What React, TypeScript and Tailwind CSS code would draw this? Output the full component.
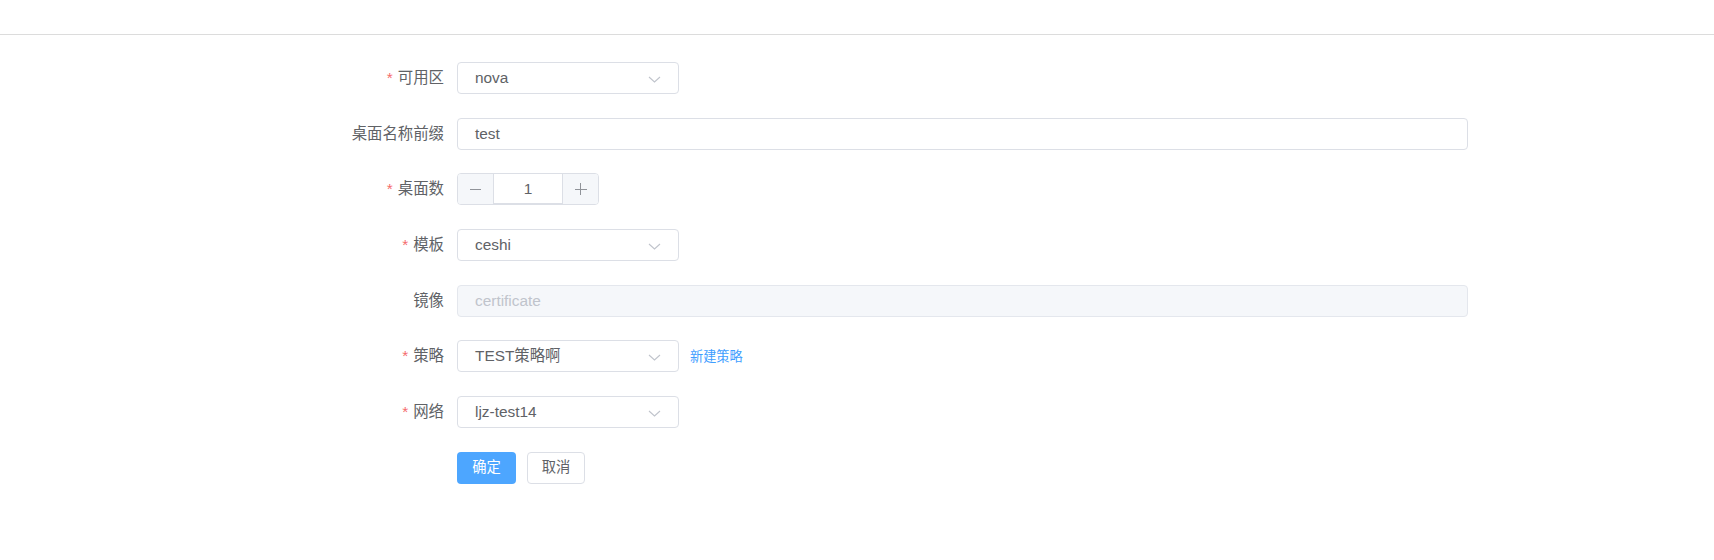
const labelCls =
  "w-[160px] shrink-0 pr-[13px] text-right text-[15.4px] text-[#606266] leading-8";

function Label({ text, required }: { text: string; required?: boolean }) {
  return (
    <label className={labelCls}>
      {required && <span className="mr-[5px] text-[#f56c6c]">*</span>}
      {text}
    </label>
  );
}

function Chevron() {
  return (
    <svg width="13" height="7" viewBox="0 0 13 7" className="absolute right-[17px] top-[13px]" fill="none">
      <path d="M1 1l5.5 5 5.5-5" stroke="#c0c4cc" strokeWidth="1.1" />
    </svg>
  );
}

function Select({ value }: { value: string }) {
  return (
    <div className="relative h-8 w-[222px] rounded border border-[#dcdfe6] bg-white pl-[17px] text-[15.4px] leading-[30px] text-[#606266]">
      {value}
      <Chevron />
    </div>
  );
}

function NumberInput({ value }: { value: number }) {
  return (
    <div className="flex h-8 w-[142px] overflow-hidden rounded border border-[#dcdfe6] bg-white text-[#606266]">
      <div className="flex w-9 items-center justify-center border-r border-[#dcdfe6] bg-[#f5f7fa]">
        <span className="block h-px w-[11px] bg-[#909399]" />
      </div>
      <div className="flex flex-1 items-center justify-center border-b border-[#dcdfe6] text-[15.4px]">{value}</div>
      <div className="relative flex w-9 items-center justify-center border-l border-[#dcdfe6] bg-[#f5f7fa]">
        <span className="block h-px w-[12px] bg-[#909399]" />
        <span className="absolute block h-[12px] w-px bg-[#909399]" />
      </div>
    </div>
  );
}

function Row({ children }: { children: React.ReactNode }) {
  return <div className="flex h-8 items-center">{children}</div>;
}

export default function App() {
  return (
    <div className="min-h-[560px] bg-white font-['Liberation_Sans','Noto_Sans_CJK_SC',sans-serif]">
      <div className="h-[35px] border-b border-[#dcdcdc]" />
      <form className="ml-[297px] flex flex-col gap-[23.7px] pt-[27px]">
        <Row>
          <Label text="可用区" required />
          <Select value="nova" />
        </Row>
        <Row>
          <Label text="桌面名称前缀" />
          <div className="h-8 w-[1011px] rounded border border-[#dcdfe6] bg-white pl-[17px] text-[15.4px] leading-[30px] text-[#606266]">
            test
          </div>
        </Row>
        <Row>
          <Label text="桌面数" required />
          <NumberInput value={1} />
        </Row>
        <Row>
          <Label text="模板" required />
          <Select value="ceshi" />
        </Row>
        <Row>
          <Label text="镜像" />
          <div className="h-8 w-[1011px] rounded border border-[#e4e7ed] bg-[#f5f7fa] pl-[17px] text-[15.4px] leading-[30px] text-[#c0c4cc]">
            certificate
          </div>
        </Row>
        <Row>
          <Label text="策略" required />
          <Select value="TEST策略啊" />
          <a className="ml-[11px] cursor-pointer text-[13.2px] text-[#409eff]">新建策略</a>
        </Row>
        <Row>
          <Label text="网络" required />
          <Select value="ljz-test14" />
        </Row>
        <div className="flex h-8 items-center">
          <div className="w-[160px] shrink-0" />
          <button type="button" className="h-8 w-[59px] rounded bg-[#4da6ff] text-[14.3px] text-white">
            确定
          </button>
          <button type="button" className="ml-[11px] h-8 w-[58px] rounded border border-[#dcdfe6] bg-white text-[14.3px] text-[#606266]">
            取消
          </button>
        </div>
      </form>
    </div>
  );
}
